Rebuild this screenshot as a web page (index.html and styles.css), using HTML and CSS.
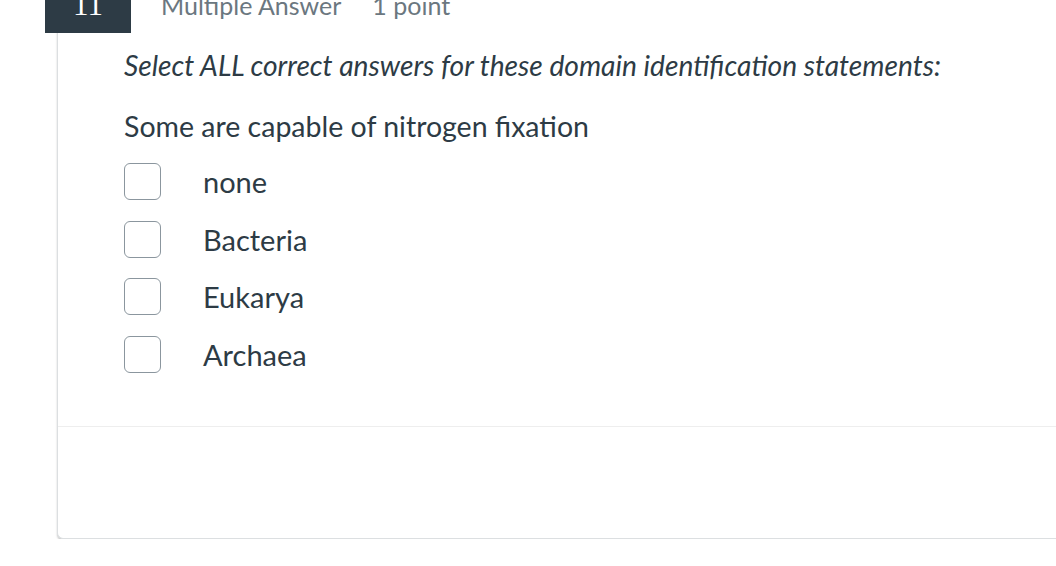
FILE: index.html
```html
<!DOCTYPE html>
<html>
<head>
<meta charset="utf-8">
<link rel="stylesheet" href="styles.css">
</head>
<body>
<div class="page">
  <section class="card">
    <header class="card-head">
      <div class="badge">11</div>
      <div class="meta">
        <span class="type">Multiple Answer</span>
        <span class="points">1 point</span>
      </div>
    </header>
    <div class="card-body">
      <p class="prompt">Select ALL correct answers for these domain identification statements:</p>
      <p class="stem">Some are capable of nitrogen fixation</p>
      <ul class="options">
        <li class="option"><span class="box"></span><span class="label">none</span></li>
        <li class="option"><span class="box"></span><span class="label">Bacteria</span></li>
        <li class="option"><span class="box"></span><span class="label">Eukarya</span></li>
        <li class="option"><span class="box"></span><span class="label">Archaea</span></li>
      </ul>
    </div>
    <div class="card-foot"></div>
  </section>
</div>
</body>
</html>
```

FILE: styles.css
```css
html, body {
  margin: 0;
  padding: 0;
  background: #ffffff;
  overflow: hidden;
}
body {
  font-family: Lato, "Noto Sans", sans-serif;
  color: #2d3b45;
}
.page {
  padding-left: 57px;
  margin-top: -40px;
}
.card {
  position: relative;
  border: 1px solid #dcdfe1;
  border-right: none;
  border-radius: 6px 0 0 6px;
  box-shadow: 0 2px 2px rgba(0, 0, 0, 0.2);
  background: #fff;
}
.card-head {
  height: 72px;
  display: flex;
  align-items: flex-end;
}
.badge {
  position: absolute;
  left: -13px;
  top: -1px;
  width: 86px;
  height: 73px;
  background: #2d3b45;
  color: #fff;
  font-family: "Liberation Serif", "DejaVu Serif", serif;
  font-size: 31px;
  display: flex;
  align-items: flex-end;
  justify-content: center;
  padding-bottom: 8px;
  box-sizing: border-box;
  line-height: 40px;
}
.meta {
  margin-left: 103px;
  display: flex;
  gap: 31px;
  font-size: 25px;
  color: #6b7780;
  line-height: 24px;
  padding-bottom: 16px;
}
.card-body {
  padding: 0 0 0 66px;
  height: 393px;
  border-bottom: 1px solid #eeeeee;
}
.prompt {
  margin: 0;
  padding-top: 15px;
  font-style: italic;
  font-size: 28.2px;
  line-height: 34px;
}
.stem {
  margin: 27px 0 0;
  font-size: 28.5px;
  line-height: 34px;
}
.options {
  list-style: none;
  margin: 20px 0 0;
  padding: 0;
  display: flex;
  flex-direction: column;
  gap: 20.5px;
}
.option {
  display: flex;
  align-items: center;
  height: 37px;
}
.box {
  width: 37px;
  height: 37px;
  box-sizing: border-box;
  border: 1px solid #8b969e;
  border-radius: 6px;
  flex: none;
}
.label {
  margin-left: 42px;
  font-size: 29px;
  line-height: 37px;
}
.card-foot {
  height: 111px;
}
```
